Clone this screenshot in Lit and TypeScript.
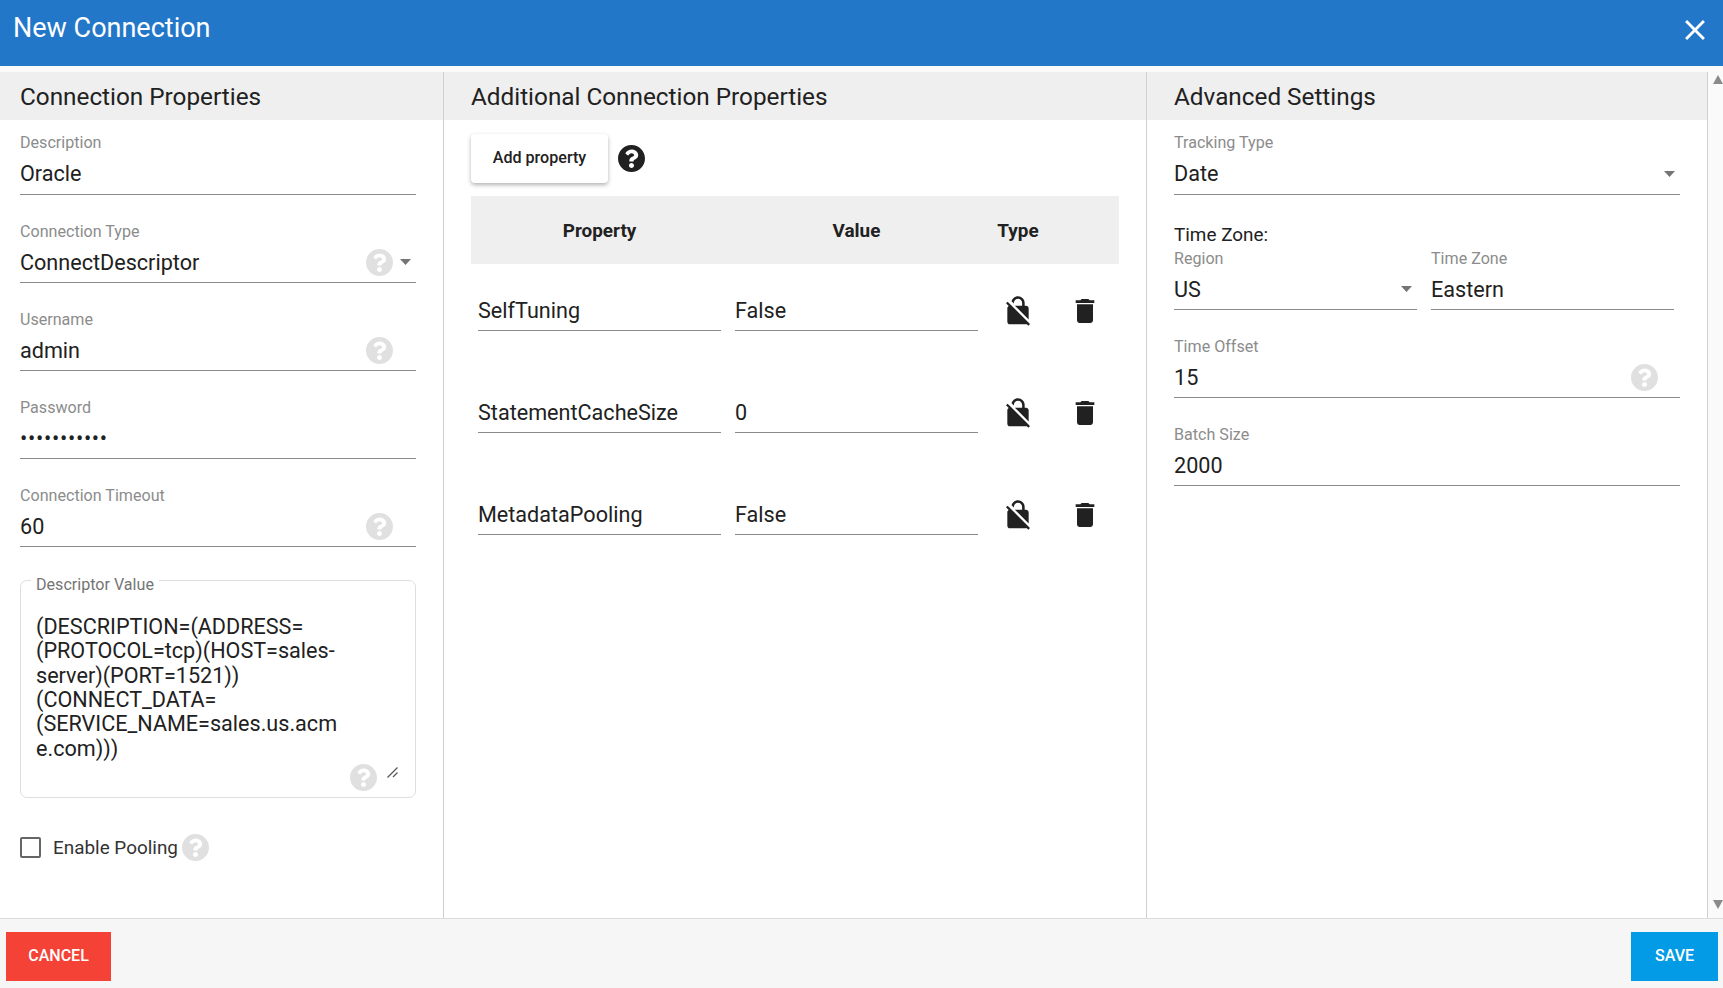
import { LitElement, css, html, svg } from "lit";
import { customElement } from "lit/decorators.js";

const HELP_PATH =
  "M504 256c0 136.997-111.043 248-248 248S8 392.997 8 256C8 119.083 119.043 8 256 8s248 111.083 248 248zM262.655 90c-54.497 0-89.255 22.957-116.549 63.758-3.536 5.286-2.353 12.415 2.715 16.258l34.699 26.31c5.205 3.947 12.621 3.008 16.665-2.122 17.864-22.658 30.113-35.797 57.303-35.797 20.429 0 45.698 13.148 45.698 32.958 0 14.976-12.363 22.667-32.534 33.976C247.128 238.528 216 254.941 216 296v4c0 6.627 5.373 12 12 12h56c6.627 0 12-5.373 12-12v-1.333c0-28.462 83.186-29.647 83.186-106.667 0-58.002-60.165-102-116.531-102zM256 338c-25.365 0-46 20.635-46 46 0 25.364 20.635 46 46 46s46-20.636 46-46c0-25.365-20.635-46-46-46z";

const DESCRIPTOR_LINES = [
  "(DESCRIPTION=(ADDRESS=",
  "(PROTOCOL=tcp)(HOST=sales-",
  "server)(PORT=1521))",
  "(CONNECT_DATA=",
  "(SERVICE_NAME=sales.us.acm",
  "e.com)))",
];

const EXTRA_PROPERTIES = [
  { name: "SelfTuning", value: "False" },
  { name: "StatementCacheSize", value: "0" },
  { name: "MetadataPooling", value: "False" },
];

@customElement("app-root")
export class AppRoot extends LitElement {
  private renderHelp(dark = false) {
    return html`<svg class="help ${dark ? "dark" : ""}" viewBox="8 8 496 496">
      ${svg`<path fill-rule="evenodd" d=${HELP_PATH} />`}
    </svg>`;
  }

  private renderArrow() {
    return html`<svg class="arrow" viewBox="0 0 11 6">
      ${svg`<path d="M0 0h11L5.5 6z" />`}
    </svg>`;
  }

  private renderField(label: string, value: string, extras: unknown = null) {
    return html`
      <div class="field">
        <div class="label">${label}</div>
        <div class="input">
          <span class="value">${value}</span>
          ${extras}
        </div>
      </div>
    `;
  }

  private renderConnectionColumn() {
    return html`
      <section class="col col-connection">
        <h2>Connection Properties</h2>
        <div class="fields">
          ${this.renderField("Description", "Oracle")}
          ${this.renderField(
            "Connection Type",
            "ConnectDescriptor",
            html`<span class="extras">${this.renderHelp()}${this.renderArrow()}</span>`,
          )}
          ${this.renderField(
            "Username",
            "admin",
            html`<span class="extras">${this.renderHelp()}<i class="arrow-space"></i></span>`,
          )}
          <div class="field">
            <div class="label">Password</div>
            <div class="input"><span class="value dots">•••••••••••</span></div>
          </div>
          ${this.renderField(
            "Connection Timeout",
            "60",
            html`<span class="extras">${this.renderHelp()}<i class="arrow-space"></i></span>`,
          )}
          <div class="descriptor">
            <span class="legend">Descriptor Value</span>
            <div class="descriptor-text">
              ${DESCRIPTOR_LINES.map((line) => html`<div>${line}</div>`)}
            </div>
            <span class="descriptor-help">${this.renderHelp()}</span>
            <svg class="resize" viewBox="0 0 12 12">
              ${svg`<path d="M0.5 10.5L10.5 0.5M6 10L10.5 5.5" />`}
            </svg>
          </div>
          <label class="pooling">
            <span class="checkbox"></span>
            <span>Enable Pooling</span>
            ${this.renderHelp()}
          </label>
        </div>
      </section>
    `;
  }

  private renderPropertiesColumn() {
    return html`
      <section class="col col-properties">
        <h2>Additional Connection Properties</h2>
        <div class="add-row">
          <button class="add">Add property</button>
          ${this.renderHelp(true)}
        </div>
        <div class="table-head grid">
          <div>Property</div>
          <div>Value</div>
          <div>Type</div>
        </div>
        <div class="rows">
          ${EXTRA_PROPERTIES.map(
            (p) => html`
              <div class="grid">
                <div class="input"><span class="value">${p.name}</span></div>
                <div class="input"><span class="value">${p.value}</span></div>
                <svg class="icon" viewBox="0 0 24 24">
                  ${svg`<path d="M21 21.78L4.22 5 3 6.22l2.04 2.04C4.42 8.6 4 9.25 4 10v10c0 1.1.9 2 2 2h12c.23 0 .45-.05.66-.12L19.78 23 21 21.78zM8.9 6c0-1.71 1.39-3.1 3.1-3.1s3.1 1.39 3.1 3.1v2H9.66L20 18.34V10c0-1.1-.9-2-2-2h-1V6c0-2.76-2.24-5-5-5-2.32 0-4.26 1.59-4.82 3.74L8.9 6.46V6z" />`}
                </svg>
                <svg class="icon" viewBox="0 0 24 24">
                  ${svg`<path d="M6 19c0 1.1.9 2 2 2h8c1.1 0 2-.9 2-2V7H6v12zM19 4h-3.5l-1-1h-5l-1 1H5v2h14V4z" />`}
                </svg>
              </div>
            `,
          )}
        </div>
      </section>
    `;
  }

  private renderAdvancedColumn() {
    return html`
      <section class="col col-advanced">
        <h2>Advanced Settings</h2>
        <div class="fields">
          ${this.renderField(
            "Tracking Type",
            "Date",
            html`<span class="extras">${this.renderArrow()}</span>`,
          )}
          <div class="tz-title">Time Zone:</div>
          <div class="tz-pair">
            ${this.renderField(
              "Region",
              "US",
              html`<span class="extras">${this.renderArrow()}</span>`,
            )}
            ${this.renderField("Time Zone", "Eastern")}
          </div>
          ${this.renderField(
            "Time Offset",
            "15",
            html`<span class="extras">${this.renderHelp()}<i class="offset-space"></i></span>`,
          )}
          ${this.renderField("Batch Size", "2000")}
        </div>
      </section>
    `;
  }

  render() {
    return html`
      <header>
        <span class="title">New Connection</span>
        <svg class="close" viewBox="0 0 24 24">
          ${svg`<path d="M19 6.41L17.59 5 12 10.59 6.41 5 5 6.41 10.59 12 5 17.59 6.41 19 12 13.41 17.59 19 19 17.59 13.41 12z" />`}
        </svg>
      </header>
      <main>
        ${this.renderConnectionColumn()} ${this.renderPropertiesColumn()}
        ${this.renderAdvancedColumn()}
        <div class="scrollbar">
          <svg viewBox="0 0 10 9">${svg`<path d="M5 0l5 9H0z" />`}</svg>
          <svg viewBox="0 0 10 9">${svg`<path d="M0 0h10L5 9z" />`}</svg>
        </div>
      </main>
      <footer>
        <button class="btn cancel">Cancel</button>
        <button class="btn save">Save</button>
      </footer>
    `;
  }

  static styles = css`
    :host {
      display: flex;
      flex-direction: column;
      height: 100vh;
      overflow: hidden;
      background: #fff;
      color: #212121;
      font-family: Roboto, "Liberation Sans", sans-serif;
    }

    header {
      flex: none;
      height: 66px;
      background: #2277c9;
      color: #fff;
      display: flex;
      justify-content: space-between;
      box-sizing: border-box;
      padding: 8px 11px 0 13px;
    }

    .title {
      font-size: 27px;
      line-height: 40px;
    }

    .close {
      width: 34px;
      height: 34px;
      margin-top: 5px;
      fill: #fff;
    }

    main {
      flex: 1;
      min-height: 0;
      display: flex;
      padding-top: 6px;
      background: #fafafa;
    }

    .col {
      box-sizing: border-box;
      background: #fff;
      border-right: 1px solid #cfcfcf;
    }

    .col-connection {
      width: 444px;
    }

    .col-properties {
      width: 703px;
    }

    .col-advanced {
      width: 561px;
    }

    h2 {
      margin: 0;
      height: 48px;
      background: #efefef;
      font-size: 24.3px;
      font-weight: 400;
      line-height: 50px;
      padding-left: 20px;
    }

    .col-properties h2 {
      padding-left: 27px;
    }

    .col-advanced h2 {
      padding-left: 27px;
    }

    .fields {
      padding: 13px 27px 0 20px;
    }

    .col-advanced .fields {
      padding-left: 27px;
    }

    .field {
      margin-bottom: 26px;
    }

    .fields > .field:first-child {
      margin-top: -1px;
    }

    .fields > .field:first-child .input {
      height: 41px;
    }

    .label {
      font-size: 16.1px;
      line-height: 21px;
      color: #8c8c8c;
    }

    .input {
      height: 40px;
      border-bottom: 1px solid #8a8a8a;
      display: flex;
      align-items: center;
      justify-content: space-between;
    }

    .value {
      font-size: 21.6px;
      white-space: nowrap;
    }

    .dots {
      letter-spacing: 0.7px;
    }

    .extras {
      display: flex;
      align-items: center;
    }

    .help {
      width: 27px;
      height: 27px;
      fill: #e0e0e0;
      flex: none;
    }

    .help.dark {
      fill: #212121;
    }

    .arrow {
      width: 11px;
      height: 6px;
      fill: #757575;
      margin-left: 7px;
      margin-right: 5px;
    }

    .arrow-space {
      width: 23px;
    }

    .offset-space {
      width: 22px;
    }

    .descriptor {
      position: relative;
      box-sizing: border-box;
      height: 218px;
      margin-top: 33px;
      border: 1.5px solid #dedede;
      border-radius: 7px;
      padding: 34px 0 0 15px;
    }

    .legend {
      position: absolute;
      top: -6px;
      left: 10px;
      padding: 0 5px;
      background: #fff;
      font-size: 16.1px;
      line-height: 20px;
      color: #757575;
    }

    .descriptor-text {
      font-size: 21.6px;
      line-height: 24.35px;
      white-space: nowrap;
    }

    .descriptor-help {
      position: absolute;
      left: 329px;
      top: 183px;
    }

    .resize {
      position: absolute;
      left: 366px;
      top: 186px;
      width: 12px;
      height: 12px;
      fill: none;
      stroke: #555;
      stroke-width: 1.2;
    }

    .pooling {
      display: flex;
      align-items: center;
      margin-top: 36px;
      height: 27px;
      font-size: 18.9px;
      color: #333;
    }

    .checkbox {
      box-sizing: border-box;
      width: 21px;
      height: 21px;
      border: 2px solid #666;
      border-radius: 2px;
      margin-right: 12px;
    }

    .pooling .help {
      margin-left: 4px;
    }

    .add-row {
      display: flex;
      align-items: center;
      margin: 14px 0 0 27px;
    }

    .add {
      width: 137px;
      height: 49px;
      padding: 0 0 2px;
      border: none;
      border-radius: 4px;
      background: #fff;
      box-shadow: 0 2px 4px rgba(0, 0, 0, 0.3);
      font-family: inherit;
      font-size: 16.1px;
      font-weight: 500;
      color: #212121;
    }

    .add-row .help {
      margin-left: 10px;
    }

    .grid {
      display: grid;
      grid-template-columns: 243px 243px 52px 54px;
      column-gap: 14px;
      padding-left: 7px;
      align-items: center;
      justify-items: center;
    }

    .grid .input {
      justify-self: stretch;
    }

    .table-head {
      margin: 13px 27px 0 27px;
      height: 68px;
      background: #efefef;
      font-size: 18.9px;
      font-weight: 700;
    }

    .rows {
      margin: 26px 27px 0 27px;
      display: flex;
      flex-direction: column;
      gap: 61px;
    }

    .icon {
      width: 32px;
      height: 32px;
      fill: #212121;
    }

    .tz-title {
      margin-top: -1px;
      height: 28px;
      font-size: 18.9px;
      line-height: 30px;
    }

    .tz-pair {
      display: grid;
      grid-template-columns: 243px 243px;
      column-gap: 14px;
    }

    .scrollbar {
      flex: 1;
      background: #fafafa;
      display: flex;
      flex-direction: column;
      justify-content: space-between;
      align-items: flex-end;
      padding: 3px 0 9px;
      overflow: hidden;
    }

    .scrollbar svg {
      width: 10px;
      height: 9px;
      fill: #8a8a8a;
    }

    footer {
      flex: none;
      box-sizing: border-box;
      height: 70px;
      border-top: 1px solid #dcdce0;
      background: #f6f6f6;
      display: flex;
      justify-content: space-between;
      padding: 13px 5px 0 6px;
    }

    .btn {
      height: 49px;
      padding: 0 0 2px;
      border: none;
      color: #fff;
      font-family: inherit;
      font-size: 16px;
      font-weight: 500;
      text-transform: uppercase;
    }

    .cancel {
      width: 105px;
      background: #f44336;
    }

    .save {
      width: 87px;
      background: #039be5;
    }
  `;
}

declare global {
  interface HTMLElementTagNameMap {
    "app-root": AppRoot;
  }
}
